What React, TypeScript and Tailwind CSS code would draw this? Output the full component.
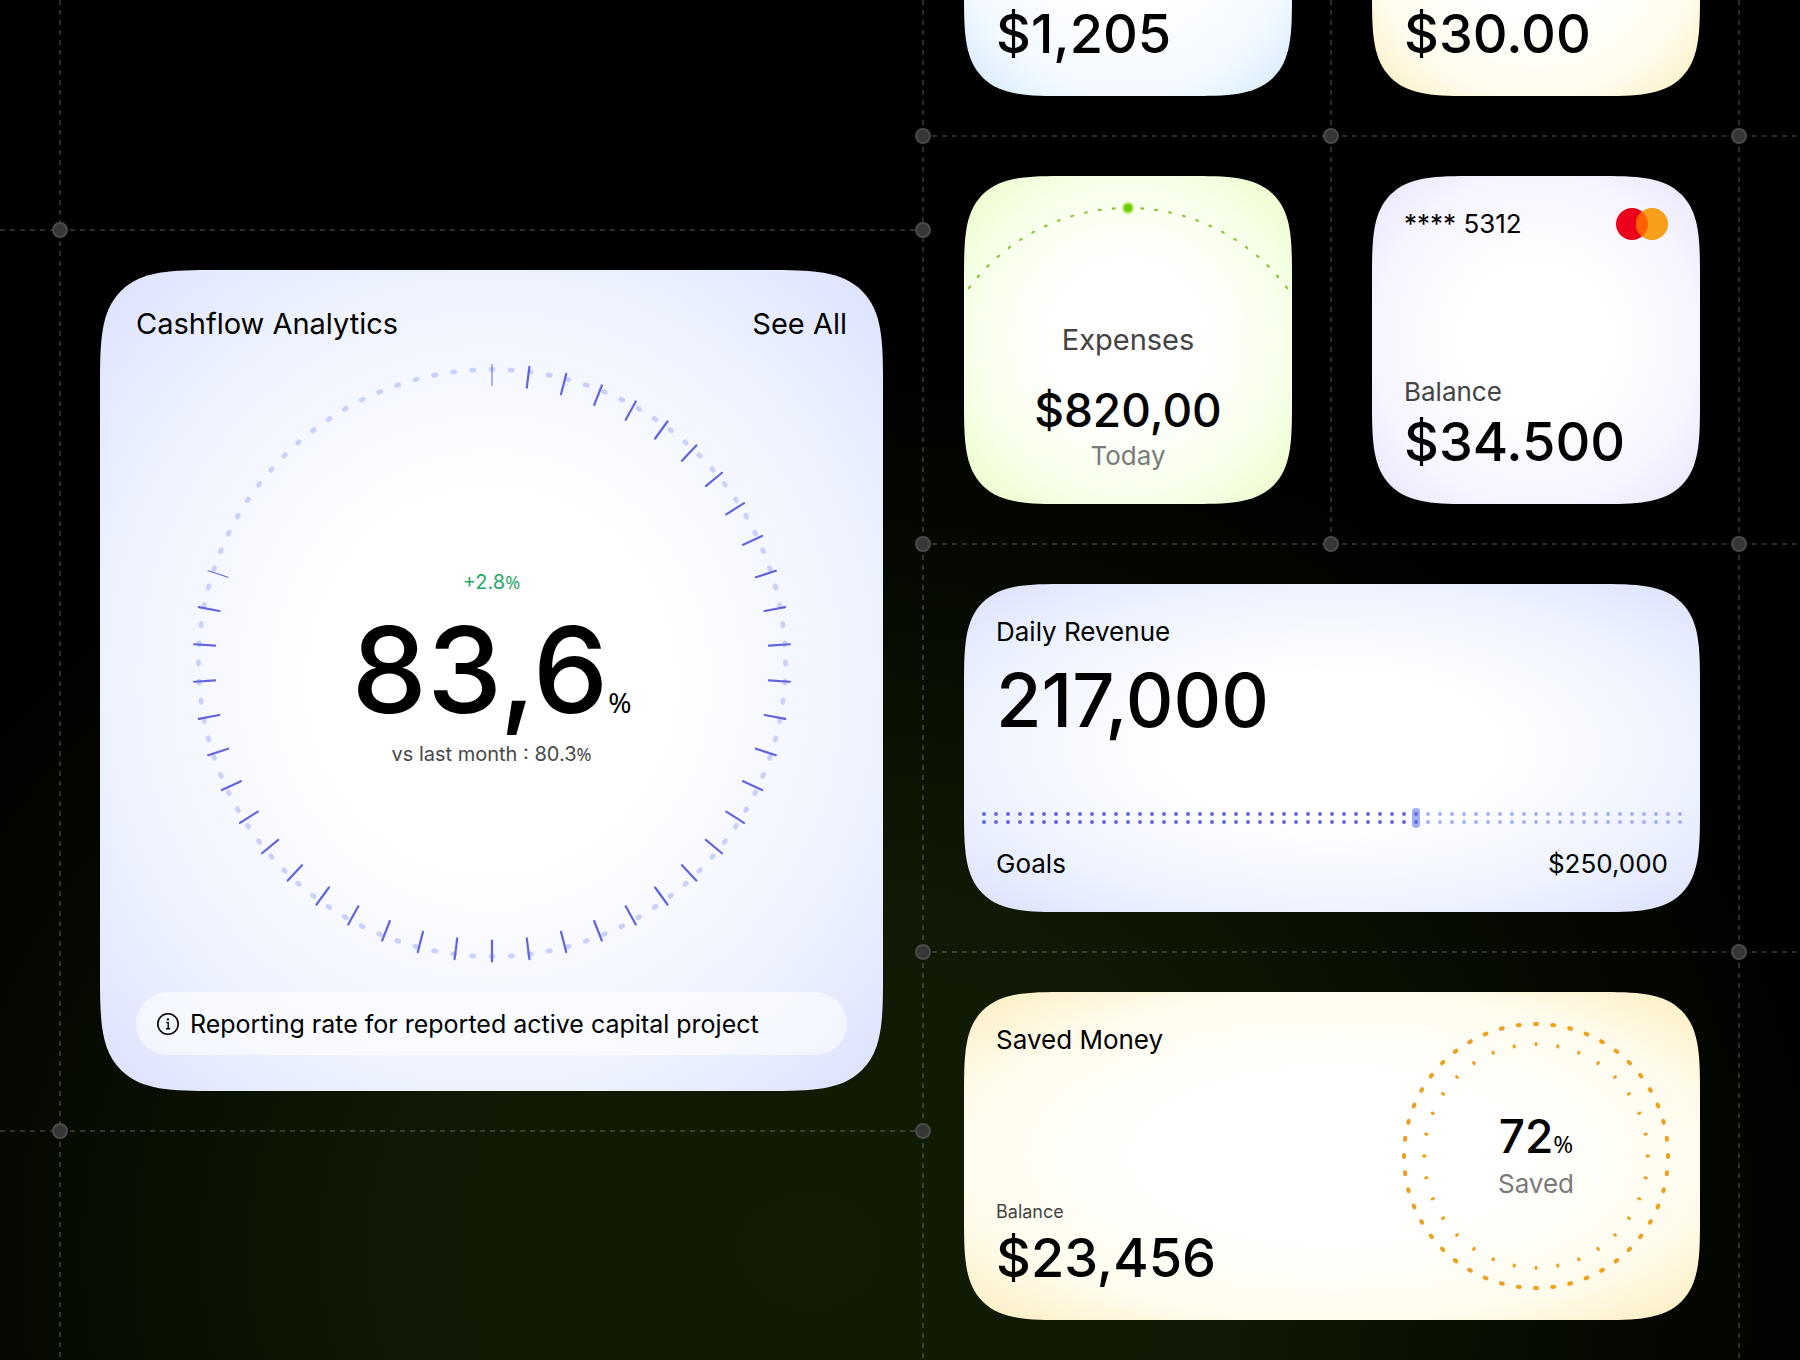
import React from 'react';
import clsx from 'clsx';

const tints = {
  indigo: 'bg-[radial-gradient(ellipse_farthest-corner_at_center,#ffffff_32%,#edf2ff_71%,#dfe4ff_95%)]',
  blue: 'bg-[radial-gradient(ellipse_farthest-corner_at_center,#ffffff_32%,#f2f9ff_71%,#d6ebff_95%)]',
  amber: 'bg-[radial-gradient(ellipse_farthest-corner_at_center,#ffffff_32%,#fffcee_71%,#fdf0c6_95%)]',
  lime: 'bg-[radial-gradient(ellipse_farthest-corner_at_center,#ffffff_32%,#f7ffe7_71%,#eafcc8_95%)]',
  violet: 'bg-[radial-gradient(ellipse_farthest-corner_at_center,#ffffff_32%,#f6f4ff_71%,#eae7fe_95%)]'
};

interface CardProps {
  tint: keyof typeof tints;
  className?: string;
  children: React.ReactNode;
}

function Card({ tint, className, children }: CardProps) {
  return (
    <section
      className={clsx(
        'relative flex min-w-0 flex-1 flex-col overflow-hidden rounded-[103px] p-8 text-black [corner-shape:superellipse(1.8)]',
        tints[tint],
        className
      )}
    >
      {children}
    </section>
  );
}

// Dashed guides between the cards
function VLine() {
  return (
    <div className="w-0.5 shrink-0 self-stretch bg-[repeating-linear-gradient(180deg,#ffffff2b_0_5px,transparent_5px_10px)]" />
  );
}

function HLine({ children }: { children: React.ReactNode }) {
  return (
    <div className="relative z-10 h-0.5 shrink-0 bg-[repeating-linear-gradient(90deg,#ffffff2b_0_5px,transparent_5px_10px)]">
      {children}
    </div>
  );
}

function Node({ className }: { className: string }) {
  return (
    <span className={clsx('absolute -top-[7px] size-4 rounded-full border-2 border-[#4a4a4a] bg-[#363636]', className)} />
  );
}

function Percent({ className }: { className: string }) {
  return <span className={clsx("font-['Noto_Sans',sans-serif] font-normal", className)}>%</span>;
}

interface RingProps {
  cx: number;
  cy: number;
  r: number;
  count: number;
  from?: number;
  to?: number;
  length: number;
  width: number;
  color: string;
}

// Short strokes that follow the circle
function DotRing({ cx, cy, r, count, from = 0, to = count - 1, length, width, color }: RingProps) {
  const items = Array.from({ length: to - from + 1 }, (_, i) => i + from);
  return (
    <g stroke={color} strokeWidth={width} strokeLinecap="round">
      {items.map((i) => (
        <line
          key={i}
          x1={cx - length / 2}
          x2={cx + length / 2}
          y1={cy - r}
          y2={cy - r}
          transform={`rotate(${(i * 360) / count} ${cx} ${cy})`}
        />
      ))}
    </g>
  );
}

function CashflowDial() {
  const ticks = Array.from({ length: 41 }, (_, i) => i);
  return (
    <svg viewBox="0 0 600 600" className="w-full" aria-hidden="true">
      <DotRing cx={300} cy={300} r={293.5} count={96} length={2} width={4.8} color="#c9d1fa" />
      <g stroke="#6264dc" strokeLinecap="round">
        {ticks.map((i) => (
          <line
            key={i}
            x1={300}
            x2={300}
            y1={1.5}
            y2={22.5}
            strokeWidth={i === 0 || i === 40 ? 1 : 2.2}
            transform={`rotate(${i * 7.2} 300 300)`}
          />
        ))}
      </g>
    </svg>
  );
}

function CashflowCard() {
  return (
    <Card tint="indigo" className="rounded-[116px] p-9">
      <header className="flex items-center justify-between text-[29px] leading-9">
        <h2>Cashflow Analytics</h2>
        <a href="#cashflow">See All</a>
      </header>
      <div className="flex flex-1 items-center justify-center pb-2">
        <div className="relative w-full max-w-[600px]">
          <CashflowDial />
          <div className="absolute inset-0 flex flex-col items-center justify-center pt-2.5">
            <p className="text-[20px] leading-8 text-[#27ab69]">
              +2.8<Percent className="text-[18px]" />
            </p>
            <p className="mt-3 flex items-baseline text-[120px] leading-[120px] font-medium">
              83,6
              <Percent className="text-[28px] leading-8" />
            </p>
            <p className="mt-2 text-[20px] leading-8 text-[#484848]">
              vs last month : 80.3<Percent className="text-[18px]" />
            </p>
          </div>
        </div>
      </div>
      <footer className="flex h-[63px] items-center gap-2.5 rounded-full bg-white/60 pr-8 pl-5">
        <svg viewBox="0 0 24 24" className="size-6 shrink-0" fill="none" stroke="#000" strokeWidth="1.6" aria-hidden="true">
          <circle cx="12" cy="12" r="10.2" />
          <path d="M10.2 10.6h2v6M10 16.8h4.2" strokeWidth="1.4" />
          <circle cx="11.9" cy="7.4" r="1.2" fill="#000" stroke="none" />
        </svg>
        <p className="text-[25px] leading-8 whitespace-nowrap">Reporting rate for reported active capital project</p>
      </footer>
    </Card>
  );
}

function ExpensesCard() {
  return (
    <Card tint="lime" className="items-center justify-end">
      <svg viewBox="0 0 328 120" className="absolute inset-x-0 top-0 w-full" aria-hidden="true">
        <DotRing cx={164} cy={230} r={198} count={88} from={-13} to={13} length={1.8} width={2.2} color="#8bc434" />
        <circle cx="164" cy="32" r="6" fill="#b5ee68" />
        <circle cx="164" cy="32" r="4" fill="#72c912" />
      </svg>
      <h2 className="mb-6 text-[29px] leading-8 text-[#444]">Expenses</h2>
      <p className="text-[46px] leading-[60px] font-medium">$820,00</p>
      <p className="text-[26px] leading-8 text-[#7a7a7a]">Today</p>
    </Card>
  );
}

function BalanceCard() {
  return (
    <Card tint="violet" className="justify-between">
      <div className="flex h-8 items-center justify-between">
        <p className="text-[26px] leading-8 whitespace-nowrap">**** 5312</p>
        <svg viewBox="0 0 52 32" className="h-8 w-[52px]" role="img" aria-label="Mastercard">
          <circle cx="16" cy="16" r="16" fill="#eb001b" />
          <circle cx="36" cy="16" r="16" fill="#f79e1b" />
          <path d="M26 3.51a16 16 0 0 1 0 24.98a16 16 0 0 1 0-24.98z" fill="#ff5f00" />
        </svg>
      </div>
      <div>
        <p className="text-[26px] leading-10 text-[#444]">Balance</p>
        <p className="text-[54px] leading-[60px] font-medium">$34.500</p>
      </div>
    </Card>
  );
}

const COLUMNS = 59;
const CURRENT = 36;

function GoalBar() {
  return (
    <div
      role="progressbar"
      aria-label="Goals"
      aria-valuenow={217000}
      aria-valuemax={250000}
      className="-mx-[15px] flex justify-between"
    >
      {Array.from({ length: COLUMNS }, (_, i) => (
        <span
          key={i}
          className={clsx(
            'flex h-5 flex-col items-center justify-center gap-1 rounded-full',
            i === CURRENT ? '-mx-px w-2 bg-[#a0aefa]' : 'w-1.5'
          )}
        >
          <i className={clsx('size-1 rounded-full', i <= CURRENT ? 'bg-[#6467de]' : 'bg-[#a5b0f5]')} />
          <i className={clsx('size-1 rounded-full', i <= CURRENT ? 'bg-[#6467de]' : 'bg-[#a5b0f5]')} />
        </span>
      ))}
    </div>
  );
}

function RevenueCard() {
  return (
    <Card tint="indigo" className="justify-between">
      <div>
        <h2 className="text-[26px] leading-8">Daily Revenue</h2>
        <p className="mt-4 text-[74px] leading-[72px] font-medium">217,000</p>
      </div>
      <div>
        <GoalBar />
        <div className="mt-5 flex items-center justify-between text-[26px] leading-8">
          <p>Goals</p>
          <p>$250,000</p>
        </div>
      </div>
    </Card>
  );
}

function SavedCard() {
  return (
    <Card tint="amber">
      <div className="flex flex-1 justify-between">
        <div className="flex flex-col justify-between">
          <h2 className="text-[26px] leading-8">Saved Money</h2>
          <div>
            <p className="text-[18px] leading-8 text-[#444]">Balance</p>
            <p className="text-[54px] leading-[60px] font-medium">$23,456</p>
          </div>
        </div>
        <div className="relative size-[264px] shrink-0">
          <svg viewBox="0 0 264 264" className="size-full overflow-visible" aria-hidden="true">
            <DotRing cx={132} cy={132} r={132} count={48} length={2} width={4} color="#ee9f1c" />
            <DotRing cx={132} cy={132} r={111} count={32} length={0.4} width={2.6} color="#ee9f1c" />
            <DotRing cx={132} cy={132} r={112.5} count={32} length={0.4} width={2.6} color="#ee9f1c" />
          </svg>
          <div className="absolute inset-0 flex flex-col items-center justify-center">
            <p className="flex items-baseline text-[46px] leading-[48px] font-medium">
              72
              <Percent className="text-[24px] leading-8" />
            </p>
            <p className="mt-2 text-[26px] leading-8 text-[#7a7a7a]">Saved</p>
          </div>
        </div>
      </div>
    </Card>
  );
}

export default function App() {
  return (
    <main className="flex min-h-screen overflow-hidden bg-black bg-[radial-gradient(ellipse_60%_68%_at_45%_92%,#111c03_0%,#0f1903_40%,#050901_75%,#000000_100%)] font-[Inter,'Liberation_Sans',sans-serif]">
      <div className="flex flex-[922] flex-col">
        <div className="flex h-[229px] pl-[59px]">
          <VLine />
        </div>
        <HLine>
          <Node className="left-[52px]" />
          <Node className="-right-[9px]" />
        </HLine>
        <div className="flex min-h-[899px] pl-[59px]">
          <VLine />
          <div className="flex flex-1 p-[39px]">
            <CashflowCard />
          </div>
        </div>
        <HLine>
          <Node className="left-[52px]" />
          <Node className="-right-[9px]" />
        </HLine>
        <div className="flex flex-1 pl-[59px]">
          <VLine />
        </div>
      </div>

      <div className="flex flex-[878] flex-col">
        <div className="flex h-[135px] overflow-hidden pr-[60px]">
          <VLine />
          <div className="flex flex-1 items-end pr-[38px] pb-[39px] pl-10">
            <Card tint="blue" className="h-[328px] justify-end">
              <p className="text-[54px] leading-[60px] font-medium">$1,205</p>
            </Card>
          </div>
          <VLine />
          <div className="flex flex-1 items-end pr-[38px] pb-[39px] pl-10">
            <Card tint="amber" className="h-[328px] justify-end">
              <p className="text-[54px] leading-[60px] font-medium">$30.00</p>
            </Card>
          </div>
          <VLine />
        </div>
        <HLine>
          <Node className="-left-[7px]" />
          <Node className="left-[calc(50%-38px)]" />
          <Node className="right-[53px]" />
        </HLine>
        <div className="flex min-h-[406px] pr-[60px]">
          <VLine />
          <div className="flex flex-1 py-[39px] pr-[38px] pl-10">
            <ExpensesCard />
          </div>
          <VLine />
          <div className="flex flex-1 py-[39px] pr-[38px] pl-10">
            <BalanceCard />
          </div>
          <VLine />
        </div>
        <HLine>
          <Node className="-left-[7px]" />
          <Node className="left-[calc(50%-38px)]" />
          <Node className="right-[53px]" />
        </HLine>
        <div className="flex min-h-[406px] pr-[60px]">
          <VLine />
          <div className="flex flex-1 py-[39px] pr-[38px] pl-10">
            <RevenueCard />
          </div>
          <VLine />
        </div>
        <HLine>
          <Node className="-left-[7px]" />
          <Node className="right-[53px]" />
        </HLine>
        <div className="flex min-h-[406px] flex-1 pr-[60px]">
          <VLine />
          <div className="flex flex-1 pt-[39px] pr-[38px] pb-10 pl-10">
            <SavedCard />
          </div>
          <VLine />
        </div>
      </div>
    </main>
  );
}
